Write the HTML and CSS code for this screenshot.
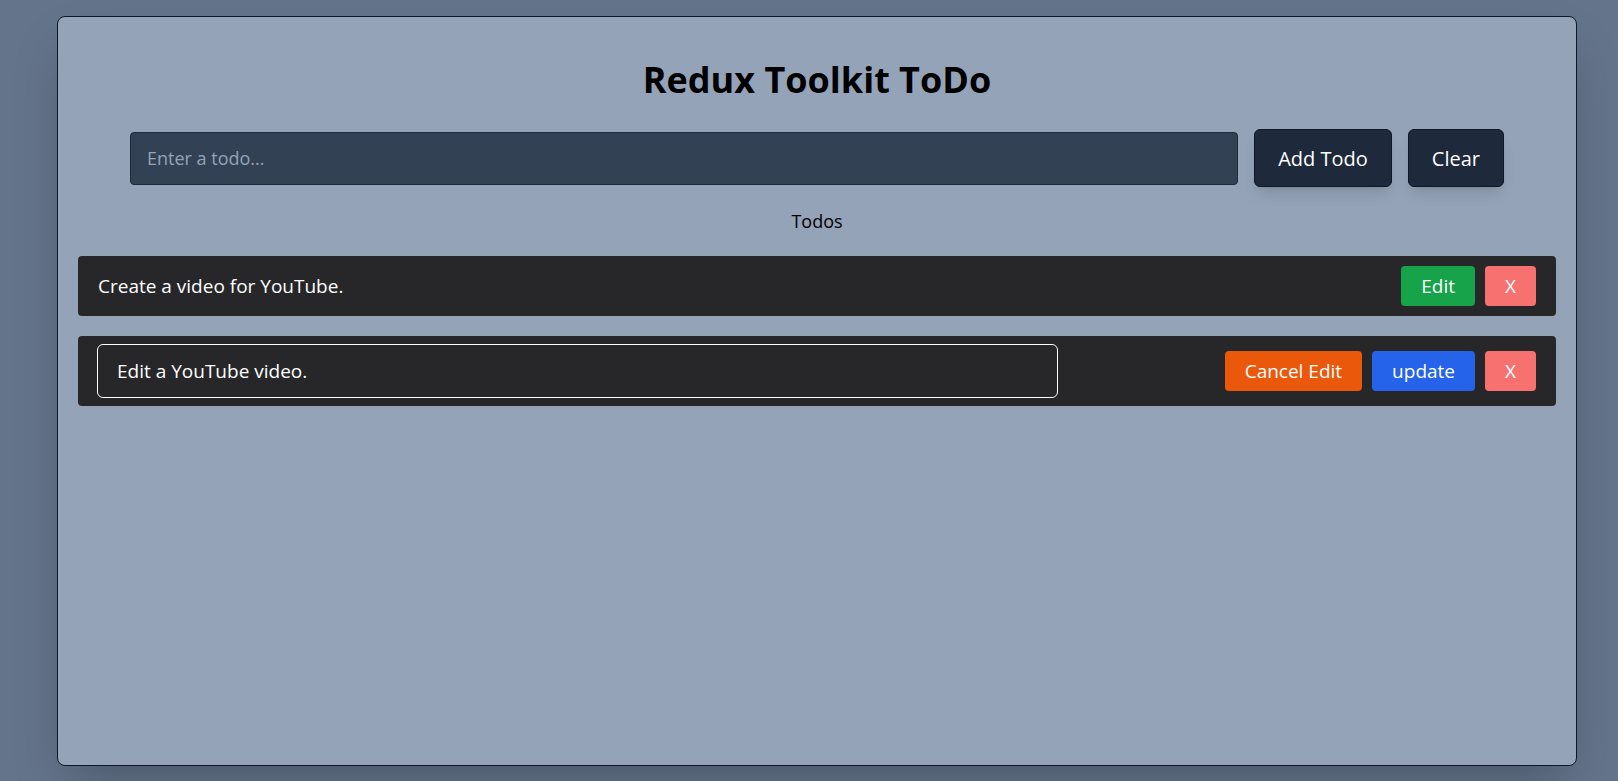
FILE: index.html
```html
<!DOCTYPE html>
<html lang="en">
<head>
<meta charset="utf-8">
<title>Redux Toolkit ToDo</title>
<link rel="stylesheet" href="styles.css">
</head>
<body>
<main class="card">
  <h1 class="title">Redux Toolkit ToDo</h1>
  <form class="add-form">
    <input class="add-input" type="text" placeholder="Enter a todo...">
    <button class="btn-dark" type="button">Add Todo</button>
    <button class="btn-dark" type="button">Clear</button>
  </form>
  <div class="list-label">Todos</div>
  <ul class="todo-list">
    <li class="todo-row">
      <span class="todo-text">Create a video for YouTube.</span>
      <div class="actions">
        <button class="btn btn-green" type="button">Edit</button>
        <button class="btn btn-red" type="button">X</button>
      </div>
    </li>
    <li class="todo-row todo-row-edit">
      <input class="edit-input" type="text" value="Edit a YouTube video." autofocus>
      <div class="actions">
        <button class="btn btn-orange" type="button">Cancel Edit</button>
        <button class="btn btn-blue" type="button">update</button>
        <button class="btn btn-red" type="button">X</button>
      </div>
    </li>
  </ul>
</main>
</body>
</html>
```
FILE: styles.css
```css
* { box-sizing: border-box; }
html, body { height: 100%; }
body {
  margin: 0;
  padding: 16px 41px 15px 57px;
  background: #64748b;
  font-family: "Open Sans", "Noto Sans", sans-serif;
  display: flex;
}
.card {
  flex: 1;
  background: #94a3b8;
  border: 1px solid #0f172a;
  border-radius: 8px;
  padding: 20px;
  box-shadow: 0 25px 50px -12px rgba(0,0,0,0.25);
}
.title {
  margin: 23px 0 0;
  font-size: 36px;
  line-height: 40px;
  font-weight: 700;
  text-align: center;
  color: #000;
}
.add-form {
  max-width: 1374px;
  margin: 29px auto 0;
  display: flex;
  align-items: center;
  gap: 16px;
}
.add-input {
  flex: 1;
  height: 53px;
  padding: 0 16px;
  background: #334155;
  border: 1px solid #1e293b;
  border-radius: 4px;
  color: #fff;
  font-family: inherit;
  font-size: 18px;
  outline: none;
}
.add-input::placeholder { color: #94a3b8; }
.btn-dark {
  height: 58px;
  padding: 0 23px;
  background: #1e293b;
  color: #fff;
  border: 1px solid #0f172a;
  border-radius: 6px;
  font-family: inherit;
  font-size: 20px;
  box-shadow: 0 10px 15px -3px rgba(0,0,0,0.1), 0 4px 6px -4px rgba(0,0,0,0.1);
}
.list-label {
  margin-top: 20px;
  text-align: center;
  font-size: 18px;
  line-height: 28px;
  color: #000;
}
.todo-list {
  list-style: none;
  margin: 21px 0 0;
  padding: 0;
  display: flex;
  flex-direction: column;
  gap: 20px;
}
.todo-row {
  min-height: 60px;
  padding: 8px 20px;
  background: #27272a;
  border-radius: 4px;
  display: flex;
  align-items: center;
  justify-content: space-between;
  color: #fff;
}
.todo-text { font-size: 19px; }
.edit-input {
  width: 961px;
  height: 54px;
  padding: 0 19px;
  background: transparent;
  border: 1px solid #fff;
  border-radius: 6px;
  color: #fff;
  font-family: inherit;
  font-size: 19px;
  outline: none;
  margin-left: -1px;
}
.actions {
  display: flex;
  gap: 10px;
}
.btn {
  height: 40px;
  padding: 0 20px;
  border: none;
  border-radius: 4px;
  color: #fff;
  font-family: inherit;
  font-size: 19px;
}
.btn-green { background: #16a34a; }
.btn-red { background: #f87171; }
.btn-orange { background: #ea580c; }
.btn-blue { background: #2563eb; }
```
